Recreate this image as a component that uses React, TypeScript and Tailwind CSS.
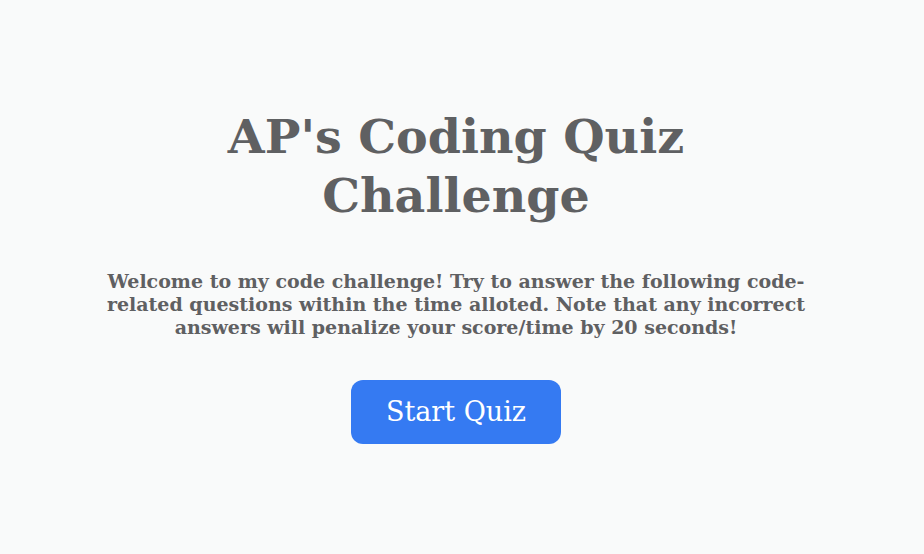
import React from "react";

export default function App() {
  return (
    <div
      className="min-h-[554px] w-full bg-[#f9fafa] text-[#5f6062] pr-[12px]"
      style={{ fontFamily: '"DejaVu Serif", "Liberation Serif", serif' }}
    >
      <div className="flex flex-col items-center pt-[107px]">
        <h1 className="text-center font-bold text-[47.5px] leading-[59px]">
          AP's Coding Quiz
          <br />
          Challenge
        </h1>
        <p className="mt-[45px] text-center font-bold text-[19px] leading-[23px]">
          Welcome to my code challenge! Try to answer the following code-
          <br />
          related questions within the time alloted. Note that any incorrect
          <br />
          answers will penalize your score/time by 20 seconds!
        </p>
        <button className="mt-[41px] h-[64px] w-[210px] rounded-[12px] bg-[#357af2] text-white text-[27px]">
          Start Quiz
        </button>
      </div>
    </div>
  );
}
